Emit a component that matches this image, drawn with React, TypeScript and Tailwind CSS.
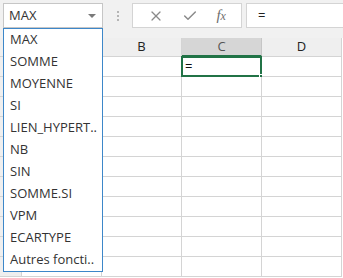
import { Check, X } from "lucide-react";

const functions = [
  "MAX",
  "SOMME",
  "MOYENNE",
  "SI",
  "LIEN_HYPERT..",
  "NB",
  "SIN",
  "SOMME.SI",
  "VPM",
  "ECARTYPE",
  "Autres foncti..",
];

const columns = ["A", "B", "C", "D"];
const rows = Array.from({ length: 11 }, (_, i) => i + 1);

function Toolbar() {
  return (
    <div className="flex h-[38px] items-start bg-[#f1f1f1] pt-[3px]">
      <div className="ml-[3px] flex h-[25px] w-[100px] items-center justify-between border border-[#c6c6c6] bg-white pl-[5px] pr-[6px]">
        <span className="text-[13px] text-[#333]">MAX</span>
        <span className="h-0 w-0 border-x-[4px] border-t-[4px] border-x-transparent border-t-[#7a7a7a]" />
      </div>
      <div className="ml-[14px] flex h-[25px] flex-col items-center justify-center gap-[2px]">
        <span className="h-[2px] w-[2px] bg-[#b5b5b5]" />
        <span className="h-[2px] w-[2px] bg-[#b5b5b5]" />
        <span className="h-[2px] w-[2px] bg-[#b5b5b5]" />
      </div>
      <div className="ml-[13px] flex h-[25px] w-[110px] items-center justify-around border border-[#d4d4d4] bg-white px-[6px]">
        <X size={16} strokeWidth={1.8} className="text-[#8a8a8a]" />
        <Check size={16} strokeWidth={2.2} className="text-[#8a8a8a]" />
        <span className="font-['Liberation_Serif',serif] text-[15px] italic text-[#6e6e6e]">
          f<span className="text-[12px]">x</span>
        </span>
      </div>
      <div className="ml-[4px] flex h-[25px] flex-1 items-center border border-r-0 border-[#d4d4d4] bg-white pl-[11px]">
        <span className="text-[13px] text-[#222]">=</span>
      </div>
    </div>
  );
}

function Grid() {
  return (
    <div>
      <div className="flex h-[19px]">
        <div className="w-[22px] border-r border-b border-[#d4d4d4] bg-[#efefef]" />
        {columns.map((c) => (
          <div
            key={c}
            className={
              c === "C"
                ? "flex w-[80px] items-center justify-center border-r border-b-2 border-r-[#c6c6c6] border-b-[#217346] bg-[#d6d6d6] text-[13px] text-[#555]"
                : "flex w-[80px] items-center justify-center border-r border-b border-[#d4d4d4] bg-[#efefef] text-[13px] text-[#222]"
            }
          >
            {c}
          </div>
        ))}
      </div>
      {rows.map((r) => (
        <div key={r} className="flex h-[20px]">
          {/* row numbers sit under the open list, so they stay empty */}
          <div className="w-[22px] border-r border-b border-[#d4d4d4] bg-[#efefef]" />
          {columns.map((c) => (
            <div key={c} className="relative w-[80px] border-r border-b border-[#d4d4d4] bg-white">
              {r === 1 && c === "C" && (
                <div className="absolute left-[-1px] top-[-1px] flex h-[21px] w-[81px] items-center border-2 border-[#217346] pl-[2px] text-[13px] text-[#111]">
                  =
                  <span className="absolute bottom-[-4px] right-[-4px] h-[5px] w-[5px] border border-white bg-[#217346]" />
                </div>
              )}
            </div>
          ))}
        </div>
      ))}
    </div>
  );
}

export default function App() {
  return (
    <div className="relative h-[278px] w-[343px] overflow-hidden bg-white font-['Open_Sans',sans-serif]">
      <Toolbar />
      <Grid />
      <ul className="absolute left-[3px] top-[28px] w-[100px] border border-[#3d87c9] bg-white">
        {functions.map((f) => (
          <li key={f} className="flex h-[22px] items-center pl-[6px] text-[13px] text-[#333]">
            {f}
          </li>
        ))}
      </ul>
    </div>
  );
}
